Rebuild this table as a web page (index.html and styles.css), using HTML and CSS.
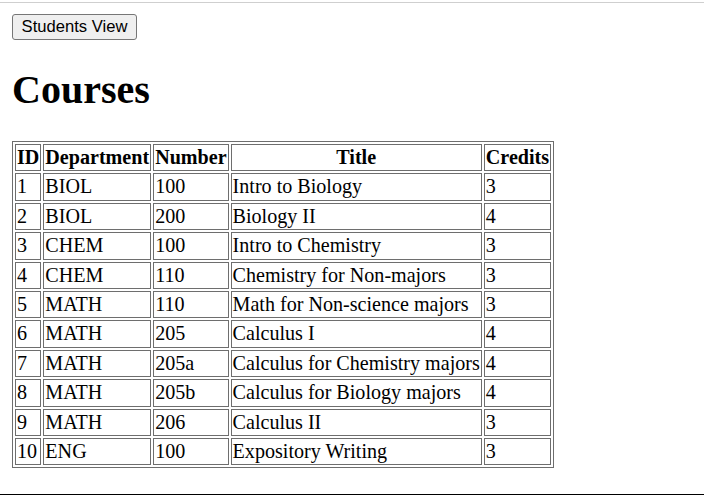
FILE: index.html
```html
<!DOCTYPE html>
<html>
<head>
<meta charset="utf-8">
<link rel="stylesheet" href="styles.css">
</head>
<body>
<div class="topline"></div>
<div class="page">
  <button class="btn">Students View</button>
  <h1 class="title">Courses</h1>
  <table class="courses">
    <thead>
      <tr><th>ID</th><th>Department</th><th>Number</th><th>Title</th><th>Credits</th></tr>
    </thead>
    <tbody>
      <tr><td>1</td><td>BIOL</td><td>100</td><td>Intro to Biology</td><td>3</td></tr>
      <tr><td>2</td><td>BIOL</td><td>200</td><td>Biology II</td><td>4</td></tr>
      <tr><td>3</td><td>CHEM</td><td>100</td><td>Intro to Chemistry</td><td>3</td></tr>
      <tr><td>4</td><td>CHEM</td><td>110</td><td>Chemistry for Non-majors</td><td>3</td></tr>
      <tr><td>5</td><td>MATH</td><td>110</td><td>Math for Non-science majors</td><td>3</td></tr>
      <tr><td>6</td><td>MATH</td><td>205</td><td>Calculus I</td><td>4</td></tr>
      <tr><td>7</td><td>MATH</td><td>205a</td><td>Calculus for Chemistry majors</td><td>4</td></tr>
      <tr><td>8</td><td>MATH</td><td>205b</td><td>Calculus for Biology majors</td><td>4</td></tr>
      <tr><td>9</td><td>MATH</td><td>206</td><td>Calculus II</td><td>3</td></tr>
      <tr><td>10</td><td>ENG</td><td>100</td><td>Expository Writing</td><td>3</td></tr>
    </tbody>
  </table>
  <div class="bottomline"></div>
</div>
</body>
</html>
```
FILE: styles.css
```css
html, body {
  margin: 0;
  padding: 0;
  background: #fff;
}
body {
  font-family: "Liberation Serif", "Times New Roman", serif;
  color: #000;
}
.topline {
  margin-top: 2px;
  border-top: 1px solid #cfcfcf;
}
.page {
  padding: 11px 0 0 12px;
}
.btn {
  display: block;
  font-family: "Liberation Sans", Arial, sans-serif;
  font-size: 16.6px;
  height: 26px;
  width: 125px;
  padding: 0 8px;
  background: #efefef;
  border: 1px solid #767676;
  border-radius: 3px;
  color: #000;
}
.title {
  font-size: 40px;
  font-weight: bold;
  margin: 27px 0 28px 0;
  line-height: 46px;
}
.courses {
  border: 1px solid #6e6e6e;
  border-spacing: 2px;
  font-size: 20.1px;
  line-height: 23.4px;
}
.courses th, .courses td {
  border: 1px solid #6e6e6e;
  padding: 1px 1px;
  text-align: left;
}
.courses th {
  text-align: center;
  font-weight: bold;
}
.bottomline {
  margin: 26px 0 0 -12px;
  border-top: 1px solid #000;
}
```
